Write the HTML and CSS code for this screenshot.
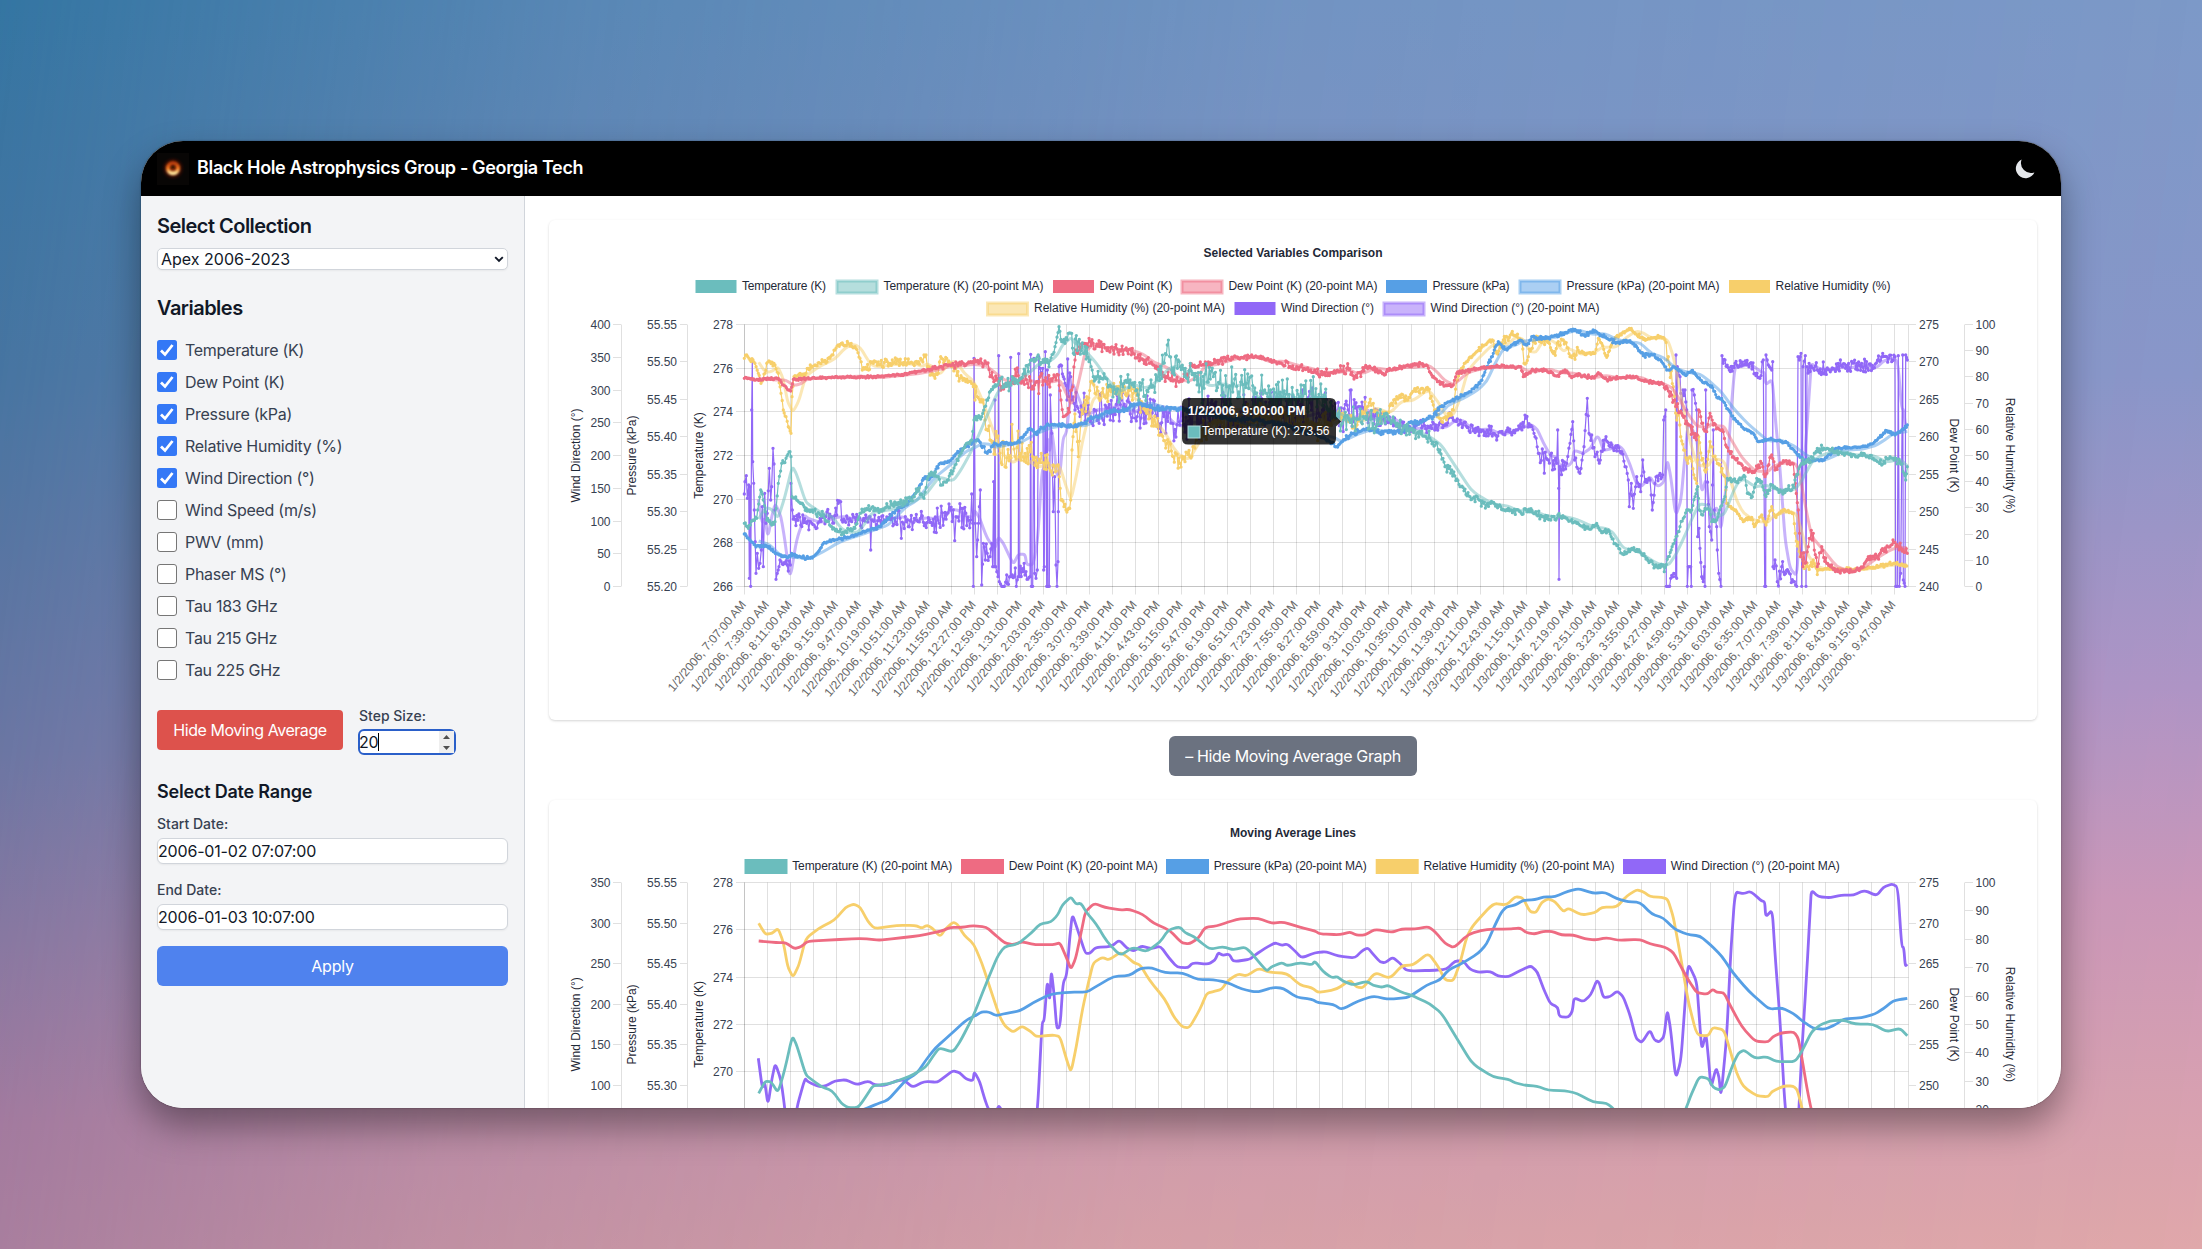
FILE: index.html
```html
<!DOCTYPE html>
<html lang="en">
<head>
<meta charset="utf-8">
<title>Black Hole Astrophysics Group - Georgia Tech</title>
<link rel="stylesheet" href="styles.css">
</head>
<body>
<div class="window">
  <header class="topbar">
    <svg class="logo" viewBox="0 0 32 32" width="32" height="32">
      <defs>
        <radialGradient id="halo"><stop offset="0" stop-color="#c2410c" stop-opacity=".9"/><stop offset=".55" stop-color="#8a2206" stop-opacity=".55"/><stop offset="1" stop-color="#300" stop-opacity="0"/></radialGradient>
        <linearGradient id="ring" x1="0" y1="0" x2="0" y2="1"><stop offset="0" stop-color="#b93d0d"/><stop offset=".55" stop-color="#f07a1c"/><stop offset="1" stop-color="#ffe9a0"/></linearGradient>
        <filter id="soft" x="-50%" y="-50%" width="200%" height="200%"><feGaussianBlur stdDeviation=".9"/></filter>
      </defs>
      <rect width="32" height="32" fill="#080605"/>
      <circle cx="16" cy="15.5" r="12" fill="url(#halo)"/>
      <circle cx="16" cy="15.2" r="5" fill="none" stroke="url(#ring)" stroke-width="4" filter="url(#soft)"/>
      <circle cx="16" cy="14.2" r="2" fill="#2a0a04" filter="url(#soft)"/>
    </svg>
    <h1 class="brand">Black Hole Astrophysics Group - Georgia Tech</h1>
    <svg class="moon" viewBox="0 0 20 20" width="20" height="20"><path d="M6.6 .6A10 10 0 0 0 19.4 13.4A9.7 9.7 0 1 1 6.6 .6Z" fill="#e5e7eb"/></svg>
  </header>
  <div class="body">
    <aside class="sidebar">
      <h2 class="heading">Select Collection</h2>
      <div class="select"><span>Apex 2006-2023</span><svg width="10" height="7" viewBox="0 0 10 7"><path d="M1.2 1.2L5 5L8.8 1.2" fill="none" stroke="#111827" stroke-width="1.9"/></svg></div>
      <h2 class="heading heading-variables">Variables</h2>
      <ul class="variables" id="variables"></ul>
      <div class="average-row">
        <button class="button button-red">Hide Moving Average</button>
        <div class="step">
          <span class="label">Step Size:</span>
          <div class="step-input"><span>20</span><i class="caret"></i><svg class="spinner" width="15" height="22" viewBox="0 0 15 22"><rect width="15" height="22" fill="#efefef"/><path d="M4 8L7.5 4L11 8ZM4 15L7.5 19L11 15Z" fill="#505050"/></svg></div>
        </div>
      </div>
      <h2 class="heading heading-range">Select Date Range</h2>
      <span class="label">Start Date:</span>
      <div class="input">2006-01-02 07:07:00</div>
      <span class="label label-end">End Date:</span>
      <div class="input">2006-01-03 10:07:00</div>
      <button class="button button-blue">Apply</button>
    </aside>
    <main class="content">
      <section class="card"><svg id="comparison" class="chart" viewBox="549 220 1488 500"></svg></section>
      <button class="button button-gray">– Hide Moving Average Graph</button>
      <section class="card"><svg id="averages" class="chart" viewBox="549 800 1488 500"></svg></section>
    </main>
  </div>
</div>
<script src="charts.js"></script>
</body>
</html>
```
FILE: styles.css
```css
* { box-sizing: border-box; }
html, body { margin: 0; height: 100%; }
body {
  position: relative;
  display: flex;
  justify-content: center;
  align-items: flex-start;
  padding-top: 141px;
  overflow: hidden;
  font-family: Inter, "Liberation Sans", sans-serif;
  color: #111827;
  background: linear-gradient(180deg, #7e9ac9 0%, #8b97ca 30%, #b095c6 55%, #cc98b9 72%, #e0a8aa 100%);
}
body::before {
  content: "";
  position: absolute;
  inset: 0;
  background: linear-gradient(180deg, #3475a2 0%, #44739f 30%, #6473a0 60%, #9b759c 90%, #a0789c 100%);
  -webkit-mask-image: linear-gradient(97deg, #000 0%, rgba(0,0,0,.5) 25%, rgba(0,0,0,.16) 55%, transparent 100%);
  mask-image: linear-gradient(97deg, #000 0%, rgba(0,0,0,.5) 25%, rgba(0,0,0,.16) 55%, transparent 100%);
}
.window {
  position: relative;
  width: 1920px;
  height: 967px;
  display: flex;
  flex-direction: column;
  border-radius: 42px;
  overflow: hidden;
  background: #fff;
  box-shadow: 0 18px 36px rgba(0,0,0,.38), 0 0 2px rgba(0,0,0,.4);
}
.topbar {
  flex: 0 0 55px;
  display: flex;
  align-items: center;
  padding: 0 26px 0 16px;
  background: #000;
}
.logo { margin-right: 8px; }
.brand { margin: 0; flex: 1; padding-bottom: 2px; font-size: 18px; line-height: 28px; font-weight: 600; color: #fff; letter-spacing: -.35px; }
.moon { display: block; }
.body { flex: 1; min-height: 0; display: flex; }
.sidebar {
  width: 384px;
  flex: none;
  padding: 16px;
  background: #f3f4f6;
  border-right: 1px solid #d1d5db;
  display: flex;
  flex-direction: column;
}
.heading { margin: 0; font-size: 20px; line-height: 28px; font-weight: 600; letter-spacing: -.52px; }
.select {
  margin-top: 8px;
  height: 22px;
  display: flex;
  align-items: center;
  justify-content: space-between;
  padding: 0 3px;
  border: 1px solid #d1d5db;
  border-radius: 5px;
  background: #fff;
  font-size: 16px;
  line-height: 20px;
  box-shadow: 0 1px 2px rgba(0,0,0,.05);
}
.heading-variables { margin-top: 24px; }
.variables { list-style: none; margin: 12px 0 0; padding: 0; display: flex; flex-direction: column; }
.variable { height: 32px; display: flex; align-items: center; gap: 8px; font-size: 16px; color: #374151; letter-spacing: -.28px; }
.check { display: block; }
.average-row { display: flex; gap: 16px; margin-top: 22px; height: 48px; }
.button { border: 0; height: 40px; font: 400 16px/24px Inter, "Liberation Sans", sans-serif; color: #fff; border-radius: 6px; letter-spacing: -.2px; padding: 0; }
.button-red { width: 186px; margin-top: 2px; border-radius: 4px; background: #dd524c; letter-spacing: -.45px; }
.step { display: flex; flex-direction: column; }
.label { font-size: 14px; line-height: 20px; font-weight: 500; color: #374151; }
.step .label { margin-top: -2px; }
.step-input {
  width: 98px;
  height: 26px;
  margin: 3px 0 0 -1px;
  display: flex;
  align-items: center;
  border: 2px solid #2a5fc9;
  border-radius: 6px;
  background: #fff;
  font-size: 16px;
  letter-spacing: -.3px;
}
.step-input span { margin-left: -1px; }
.caret { width: 1px; height: 18px; background: #000; }
.spinner { margin-left: auto; }
.heading-range { margin-top: 22px; font-size: 18px; letter-spacing: -.2px; }
.heading-range + .label { margin-top: 8px; }
.input {
  height: 26px;
  margin-top: 4px;
  border: 1px solid #d1d5db;
  border-radius: 6px;
  background: #fff;
  font-size: 16px;
  line-height: 24px;
  letter-spacing: -.18px;
  box-shadow: 0 1px 2px rgba(0,0,0,.05);
}
.label-end { margin-top: 16px; }
.button-blue { margin-top: 16px; background: #4f82ee; }
.content {
  flex: 1;
  padding: 24px;
  display: flex;
  flex-direction: column;
  align-items: center;
  background: #fff;
  overflow: hidden;
}
.card {
  flex: none;
  width: 1488px;
  height: 500px;
  border-radius: 6px;
  background: #fff;
  box-shadow: 0 1px 3px rgba(0,0,0,.12), 0 1px 2px rgba(0,0,0,.05);
}
.button-gray { flex: none; width: 248px; margin: 16px 0 24px; background: #6b7280; letter-spacing: -.35px; }
.chart { display: block; width: 1488px; height: 500px; font: 12px "Liberation Sans", Arial, sans-serif; fill: #1f2937; }
.chart .title { font-weight: 700; }
.chart .tick { fill: #374151; }
.chart .time { fill: #666; }
.grid { stroke: rgba(0,0,0,.12); stroke-width: 1; fill: none; }
.edge { stroke: rgba(0,0,0,.12); stroke-width: 1; fill: none; }
.line { fill: none; stroke-linejoin: round; stroke-linecap: butt; }
.chart .tip { fill: #fff; }
```
FILE: charts.js
```js
const COLORS = { temp: '#6bbdbd', dew: '#ee6b82', pres: '#569fe5', hum: '#f7cf6b', wind: '#9168f7' };
const LIGHT = { temp: '#b5dedd', dew: '#f7b5c1', pres: '#abcff3', hum: '#fbe7b5', wind: '#c9b3fb' };
const ORDER = ['wind', 'hum', 'pres', 'dew', 'temp'];

/* Observations: x, y pairs in thirds of a pixel; ~n sets the scatter that follows. */
const raw = {
temp: '~8 133,640 145,655 160,630 170,625 182,540 190,570 200,630 215,645 225,635 235,520 245,460 258,445 270,425 273,440 276,560 290,570 310,585 330,605 370,615 395,650 415,665 440,668 465,655 480,610 500,595 540,600 575,585 620,575 640,560 655,540 672,565 685,500 700,490 715,500 725,525 745,510 765,465 790,415 815,390 822,330 ~10 845,320 860,270 880,230 900,205 ~14 915,230 960,205 1000,150 1050,152 ~8 1065,110 1077,50 1085,95 1095,100 1105,70 1115,70 ~25 1120,130 1135,95 1150,130 1170,150 1180,200 ~15 1200,200 1230,225 ~30 1250,245 1290,210 1310,240 1350,230 1370,210 1390,160 1402,105 1415,180 1435,150 1450,175 ~25 1480,190 1500,225 ~42 1540,200 1580,230 1640,220 1700,250 ~45 1750,260 1800,260 1838,260 1840,200 1842,265 1880,290 ~28 1930,330 1990,320 2020,340 2050,320 ~14 2070,330 2110,355 2150,370 2190,385 ~9 2220,420 2235,470 2255,480 2280,530 2310,560 2350,580 2390,585 2440,605 2490,605 2540,625 2580,618 ~5 2630,640 2670,658 2690,640 2705,668 2725,660 2745,700 2765,730 2780,730 2795,715 2820,725 2850,755 2865,770 2890,765 2893,785 2905,740 2925,690 2940,650 2950,625 2960,600 2975,600 2985,560 2993,530 2998,600 3008,615 3015,595 3028,600 3035,635 3050,630 3062,590 3075,560 3082,505 3110,515 3135,500 3142,550 3157,560 3170,505 3185,515 3195,555 ~9 3215,525 3240,540 3275,540 3285,510 3305,460 3340,445 3352,415 3380,415 3400,425 ~5 3430,430 3470,440 3490,430 3520,445 ~9 3545,465 3570,440 3600,455 3612,490 3617,510 3622,470',
dew: '~3 133,205 170,208 235,205 250,225 265,240 272,243 280,208 400,202 500,201 600,195 680,180 720,170 ~8 800,162 830,155 ~14 858,158 870,200 890,205 ~22 905,230 940,200 970,215 1010,215 ~28 1040,215 1065,200 1075,195 1083,270 1090,320 1105,295 ~40 1115,240 1125,150 1135,130 ~14 1148,100 1170,95 1200,110 ~11 1260,120 1300,130 1330,150 1360,165 ~14 1390,200 1410,205 1440,215 1480,170 ~9 1540,160 1580,145 ~5 1670,140 1740,160 ~8 1790,170 1850,190 ~12 1900,190 1940,175 1965,200 2000,170 ~8 2050,190 2090,175 ~4 2150,162 2182,167 2195,195 2215,215 2235,227 2260,225 2270,190 2320,177 2370,170 2462,170 2470,200 2500,180 2540,182 2570,198 2595,180 2615,203 2630,193 2680,203 2695,188 2720,208 2790,198 2830,212 2890,222 ~12 2902,235 2915,255 2930,290 2945,310 2965,345 2980,370 2992,375 2996,300 3005,340 ~6 3020,365 3030,310 3040,345 3070,365 3077,405 3100,440 3130,475 3160,485 ~10 3185,460 3195,500 3215,435 3225,480 ~4 3250,452 3280,462 3286,520 3295,600 ~22 3302,740 3315,760 3325,710 3340,670 3352,770 3365,710 ~12 3380,760 ~5 3415,785 3460,785 3490,770 3505,740 ~8 3530,742 3550,722 3570,710 ~14 3585,697 3610,720 3622,730',
pres: '~4 133,672 150,690 165,705 200,710 220,725 245,740 265,742 275,730 295,740 325,745 340,740 355,725 370,700 390,690 430,685 470,675 500,662 540,650 560,630 590,600 620,585 650,545 670,505 690,505 705,485 720,460 750,452 770,430 800,405 ~8 820,395 835,390 850,410 862,430 ~5 880,405 910,400 950,398 970,380 990,355 1005,370 1040,345 1090,345 1130,350 1150,340 1170,325 1200,315 1240,300 1260,305 1290,290 1320,280 1345,290 1380,295 1440,297 1500,305 1600,330 1650,325 1750,345 1850,375 1890,395 1910,410 1930,390 1960,370 2000,355 2040,368 2110,365 2130,338 2160,335 2200,320 2220,290 2250,275 2310,245 2340,220 2360,170 2380,130 2395,95 2415,118 2440,102 2465,92 2480,105 2495,80 2540,85 2570,75 2625,58 2650,75 2685,62 2720,85 2750,98 2790,92 2810,110 2830,137 2860,135 2885,155 2900,180 ~3 2925,172 2955,195 2975,182 3010,218 3035,228 3050,262 3065,265 3095,318 3125,350 3160,370 3175,395 3210,388 3260,398 3285,425 3315,452 3370,450 3410,415 3480,412 3520,400 3560,362 3585,375 3605,360 3622,345',
hum: '~6 133,145 140,135 150,150 165,160 175,190 183,220 195,190 200,160 210,155 225,165 235,190 243,250 250,300 258,320 265,350 273,370 276,260 282,200 300,190 315,195 325,175 360,160 390,145 405,120 415,105 445,100 465,110 480,145 487,180 500,178 ~11 520,160 580,160 655,155 665,150 672,135 678,135 682,170 705,205 715,190 722,140 740,145 755,170 780,205 812,215 820,230 ~28 825,270 850,270 855,330 ~45 870,390 900,430 ~60 960,430 1000,450 ~32 1075,465 1078,500 ~14 1083,570 1098,600 1112,570 1116,420 ~55 1122,340 1130,350 1135,440 ~32 1145,300 1160,260 1172,215 ~28 1185,250 1250,230 1300,250 1340,310 1370,350 ~20 1400,400 1420,440 1440,460 1470,440 1490,390 ~30 1540,340 1700,320 1850,350 1900,330 ~20 1925,310 1960,350 1980,320 2020,280 2040,320 ~10 2060,310 2090,260 2120,270 2150,235 2185,240 2200,285 2225,335 2260,300 ~5 2270,210 2290,170 2320,135 2370,90 2380,92 ~12 2390,130 2410,90 2440,75 2465,90 2472,160 2485,140 2500,95 2540,90 2560,130 2590,90 2610,140 2625,148 ~4 2632,112 2640,128 2685,130 2695,85 2705,100 2720,142 2740,90 2788,55 2830,88 2880,80 2895,90 ~18 2905,140 2920,230 2930,330 2937,310 2942,380 ~10 2960,450 2970,440 2990,520 2996,380 3005,450 3020,478 3030,395 3042,440 3055,460 3075,500 ~4 3080,580 3110,605 3130,635 3155,622 3163,650 3185,615 3198,645 3215,590 3225,620 3250,600 3280,610 ~14 3286,670 3300,740 3315,775 3340,750 3355,780 ~4 3380,777 3480,778 3540,768 3585,760 3620,768',
wind: '~0 133,552 135,515 139,497 142,565 146,525 148,805 150,530 152,829 155,300 157,150 158,455 161,520 163,600 168,790 172,730 176,775 180,760 184,720 187,590 190,770 194,550 198,640 202,610 208,475 212,570 215,530 219,415 222,462 225,600 228,808 232,790 237,770 ~18 240,750 271,765 273,520 277,600 282,620 320,640 345,650 360,625 410,615 415,580 422,575 425,630 500,625 510,620 512,720 515,630 600,625 604,685 610,640 700,628 ~30 750,600 760,600 764,692 768,620 812,630 815,552 818,640 820,829 822,145 826,640 ~45 830,740 841,540 845,825 850,700 856,750 862,730 870,740 875,700 ~0 878,770 881,515 883,770 885,270 887,770 894,800 896,137 898,815 905,829 910,829 ~25 920,795 931,800 932,142 934,800 955,800 956,131 958,800 975,795 990,800 ~0 992,133 994,829 998,829 1002,145 1004,790 1008,805 1012,780 1016,140 ~14 1020,175 1028,175 ~0 1031,780 1033,770 1036,125 1040,829 1042,180 1044,829 1048,829 1051,255 1055,370 1060,605 1064,500 1068,765 1071,829 1074,755 1075,605 1077,170 ~30 1082,165 1090,200 1095,220 1101,270 1103,147 1106,260 1112,200 1116,270 ~40 1125,300 1300,300 1335,310 1360,270 1370,320 1440,345 ~50 1500,310 1700,310 1900,310 1980,290 ~28 2050,330 ~14 2120,350 2240,345 2252,310 2260,330 2290,345 2340,360 2380,370 2390,390 2400,365 2450,360 2478,325 2490,350 2505,380 ~30 2515,430 2545,450 2570,460 2573,360 2576,535 2577,808 2579,470 2590,480 ~14 2600,460 2610,400 2618,335 2624,450 2640,490 2652,410 2662,265 2667,370 2675,375 2685,440 2695,450 2718,380 ~10 2730,410 2765,425 2775,470 2785,510 2788,590 2794,520 2800,595 2810,500 2822,545 2828,450 2835,515 2850,510 2857,600 2865,520 2880,490 2888,495 2891,330 2897,300 ~0 2899,829 2909,829 ~12 2912,805 2927,800 2928,135 2930,805 2932,170 2940,200 2945,300 2949,240 2955,240 2960,300 ~0 2962,829 2965,770 2972,770 2974,829 2976,240 ~10 2983,255 2990,300 2993,680 2997,655 3000,715 3005,800 3010,815 3013,770 3015,829 3017,240 3020,450 3028,650 3035,690 3040,360 3043,600 3050,650 3052,720 3056,790 3063,829 3066,137 3070,160 3075,150 3088,180 3105,160 3130,165 3150,160 ~18 3165,190 3180,205 3190,150 ~0 3194,829 3197,829 3198,135 3205,165 3215,180 3218,155 3219,770 ~22 3225,750 3232,815 3245,770 3268,790 3280,815 3290,829 ~0 3294,140 3298,150 3303,130 3305,829 3309,170 3316,137 3318,829 3321,170 ~15 3340,175 3400,175 3470,160 3520,175 3548,130 3575,155 3585,140 ~0 3587,829 3592,829 3595,137 3598,829 3602,790 3608,135 3610,810 3615,829 3617,135 3622,150'
};

/* 20-point moving averages on the second chart's scale, in thirds of a pixel. */
const average = {
temp: '176,1120 196,1083 214,1086 234,1118 254,1050 277,948 290,975 317,1065 337,1080 364,1100 397,1112 424,1150 444,1163 473,1163 491,1140 518,1098 538,1095 571,1090 605,1078 638,1065 678,1040 698,1010 718,983 759,997 783,960 819,890 859,790 892,710 913,680 953,672 993,640 1020,612 1053,606 1073,585 1087,555 1113,530 1127,552 1143,550 1160,578 1187,610 1221,665 1261,707 1298,682 1341,695 1381,665 1405,630 1439,620 1455,638 1482,650 1500,665 1530,688 1568,680 1600,689 1635,681 1655,700 1680,730 1700,753 1715,740 1745,728 1762,737 1800,728 1835,734 1845,724 1870,755 1895,773 1912,770 1930,784 1960,795 2000,784 2020,796 2045,802 2065,796 2100,815 2140,828 2190,852 2225,880 2270,955 2310,1020 2330,1040 2380,1071 2425,1078 2445,1088 2475,1096 2510,1098 2545,1111 2595,1112 2630,1120 2680,1146 2720,1150 2740,1165 2770,1215 2810,1222 2870,1264 2905,1271 2930,1231 2960,1160 2975,1120 2998,1070 3025,1075 3040,1103 3060,1110 3075,1100 3100,1030 3115,1000 3132,990 3165,1015 3200,1010 3230,1025 3285,1025 3305,995 3335,935 3360,915 3390,903 3430,900 3465,912 3520,913 3560,935 3600,925 3622,947',
dew: '176,663 230,668 257,668 283,686 303,680 323,664 390,660 484,655 538,661 591,655 658,647 725,633 752,622 785,622 819,617 859,621 886,645 913,668 939,674 966,665 1006,674 1060,674 1080,668 1100,715 1113,748 1127,715 1143,640 1156,575 1183,550 1214,562 1261,570 1287,568 1328,583 1361,610 1408,630 1445,668 1468,672 1495,655 1515,622 1550,618 1585,606 1620,596 1675,595 1715,610 1750,606 1800,622 1845,633 1860,642 1920,644 1950,636 1970,646 1995,645 2025,628 2075,637 2105,627 2145,627 2185,620 2205,635 2235,670 2262,684 2305,642 2360,628 2430,627 2460,624 2480,638 2505,642 2530,634 2555,634 2585,645 2620,645 2655,656 2685,660 2720,653 2755,661 2820,658 2850,672 2895,681 2920,697 2940,735 2965,780 2990,818 3022,823 3038,808 3050,817 3072,818 3090,855 3125,920 3165,964 3205,966 3218,950 3245,938 3282,936 3295,955 3305,1010 3320,1100 3335,1177 3370,1220 3410,1275 3450,1288 3490,1280 3530,1247 3580,1215 3620,1212',
pres: '176,1191 210,1204 240,1237 270,1244 330,1248 370,1226 420,1193 470,1176 504,1163 531,1152 564,1140 591,1110 618,1080 651,1060 678,1020 705,985 752,943 799,900 826,887 846,875 866,876 888,887 919,880 959,873 1000,848 1053,822 1113,816 1160,817 1187,800 1241,769 1288,767 1321,745 1354,743 1395,758 1448,759 1495,779 1540,779 1580,787 1625,807 1670,817 1720,802 1750,805 1790,832 1835,838 1855,848 1900,853 1925,869 1975,843 2020,828 2065,838 2120,833 2140,823 2180,795 2220,780 2245,750 2290,728 2335,700 2360,672 2385,615 2405,575 2420,560 2445,556 2470,541 2505,539 2530,531 2565,530 2605,513 2637,506 2680,520 2715,517 2750,536 2785,545 2820,547 2855,582 2890,594 2925,628 2960,643 3000,648 3030,673 3065,708 3100,760 3145,812 3200,862 3215,867 3245,864 3280,880 3310,905 3340,925 3375,928 3410,912 3430,897 3485,893 3525,882 3550,866 3580,842 3605,838 3622,835',
hum: '176,610 196,643 216,640 234,625 250,665 263,740 279,772 297,735 317,655 357,625 404,600 437,562 461,552 481,562 504,605 524,626 591,616 645,616 665,624 682,616 698,625 720,650 738,625 759,607 772,612 792,645 821,672 846,730 872,810 899,890 915,918 939,937 966,918 993,935 1009,950 1060,945 1080,950 1100,1020 1113,1057 1129,980 1147,870 1167,780 1180,728 1207,712 1227,720 1261,697 1281,710 1301,728 1321,735 1348,780 1395,838 1421,890 1445,920 1468,924 1500,868 1520,820 1545,814 1565,808 1585,780 1615,762 1640,768 1675,745 1710,757 1760,760 1800,795 1835,803 1855,818 1910,808 1950,780 1970,802 1990,803 2025,757 2070,776 2105,737 2140,735 2185,699 2215,740 2235,780 2260,783 2280,730 2300,650 2320,615 2380,550 2420,555 2445,530 2468,533 2490,575 2508,578 2525,547 2545,536 2565,545 2590,575 2605,565 2645,585 2685,578 2705,562 2750,561 2780,528 2810,509 2830,515 2850,530 2885,532 2903,538 2920,590 2940,700 2965,845 2990,945 3025,948 3038,922 3072,930 3090,990 3110,1060 3130,1100 3170,1128 3205,1130 3215,1115 3250,1098 3280,1098 3292,1110 3305,1160 3325,1242 3360,1280 3430,1287 3500,1283 3580,1269 3620,1267',
wind: '175,1015 187,1105 194,1085 204,1155 216,1075 226,1030 243,1080 254,1163 270,1315 290,1163 315,1075 323,1085 357,1100 377,1098 404,1083 437,1079 471,1094 504,1083 524,1094 551,1097 591,1082 611,1080 638,1102 674,1084 712,1087 732,1072 759,1052 779,1058 799,1078 819,1082 823,1055 839,1085 852,1130 863,1163 885,1200 895,1155 910,1178 940,1258 955,1219 975,1219 980,1258 1000,1258 1013,1163 1026,910 1033,900 1042,780 1049,845 1054,750 1062,820 1070,925 1080,922 1089,790 1100,765 1109,655 1117,582 1133,630 1156,700 1170,700 1187,682 1234,680 1258,660 1281,685 1301,693 1325,678 1354,686 1381,678 1408,715 1432,742 1464,743 1478,728 1525,733 1545,720 1555,698 1568,706 1588,702 1600,725 1650,718 1665,705 1695,685 1725,668 1745,676 1762,672 1780,688 1805,714 1845,698 1878,695 1915,708 1965,714 1985,693 2003,683 2020,703 2040,726 2055,728 2078,712 2100,730 2120,753 2200,751 2240,748 2265,723 2290,723 2310,748 2335,757 2370,754 2395,769 2425,770 2460,752 2492,737 2512,755 2530,805 2550,850 2573,862 2578,890 2605,892 2617,875 2622,833 2650,845 2672,825 2690,782 2698,788 2710,833 2730,830 2752,813 2770,830 2790,885 2808,955 2825,968 2850,930 2863,960 2878,966 2892,950 2902,868 2912,930 2927,1078 2943,1020 2955,850 2963,745 2968,737 2990,785 2997,880 3005,990 3018,940 3025,1010 3033,1105 3048,1043 3057,1070 3063,1132 3080,950 3092,700 3105,515 3130,521 3152,514 3185,543 3194,545 3197,590 3217,570 3225,700 3240,900 3255,1162 3270,1272 3290,1300 3297,1162 3305,1000 3320,760 3330,580 3334,510 3355,530 3390,533 3425,525 3460,526 3493,511 3530,527 3550,502 3575,492 3593,500 3605,680 3611,682 3616,738 3622,733'
};

let seed = 7;
const rnd = () => (seed = (seed * 16807) % 2147483647) / 2147483647;
const X = u => 700 + u / 3;
const f = n => n.toFixed(1);

function scatter(text) {
  const out = [];
  let n = 0, prev = null;
  for (const t of text.split(' ')) {
    if (t[0] === '~') { n = +t.slice(1); continue; }
    const [x, y] = t.split(',').map(Number);
    if (prev) {
      const steps = Math.max(1, Math.round((x - prev[0]) / 3));
      for (let i = 1; i < steps; i++) {
        const k = i / steps;
        const big = Math.abs(y - prev[1]) / (x - prev[0]) > 12 ? 0 : 1;
        const s = (rnd() + rnd() - 1) * 1.6;
        out.push([prev[0] + (x - prev[0]) * k, Math.max(43, Math.min(829, prev[1] + (y - prev[1]) * k + s * n * big))]);
      }
    }
    out.push([x, y]);
    prev = [x, y];
  }
  return out.map(([x, y]) => [X(x), 310 + y / 3]);
}
const pairs = text => text.split(' ').map(t => t.split(',').map(Number));
const poly = pts => 'M' + pts.map(p => f(p[0]) + ' ' + f(p[1])).join('L');
/* rounds each corner over a quarter of its neighbouring segments */
function smooth(pts) {
  let d = 'M' + f(pts[0][0]) + ' ' + f(pts[0][1]);
  for (let i = 1; i < pts.length - 1; i++) {
    const [px, py] = pts[i - 1], [a, b] = pts[i], [c, e] = pts[i + 1];
    d += `L${f(a - (a - px) * .3)} ${f(b - (b - py) * .3)}Q${f(a)} ${f(b)} ${f(a + (c - a) * .3)} ${f(b + (e - b) * .3)}`;
  }
  const l = pts[pts.length - 1];
  return d + `L${f(l[0])} ${f(l[1])}`;
}

const text = (x, y, s, cls, extra = '') => `<text x="${x}" y="${y}" class="${cls}" ${extra}>${s}</text>`;
const turned = (x, y, deg, s) => `<text transform="translate(${x} ${y}) rotate(${deg})" text-anchor="middle" dy="4">${s}</text>`;

function axes(top, bottom, wind) {
  let s = '', g = '';
  const h = bottom - top;
  const L = 744.5, R = 1908.5;
  for (let k = 0; k <= 50; k++) { const x = Math.round(L + k * 22.99 - .5) + .5; g += `M${x} ${top}V${bottom + 8}`; }
  g += `M${R} ${top}V${bottom}`;
  for (let i = 0; i <= 6; i++) {
    const y = Math.round(top + h * i / 6 - .5) + .5;
    g += `M736 ${y}H${R}`;
    s += text(733, y + 4, 278 - 2 * i, 'tick', 'text-anchor="end"');
  }
  g += `M621.5 ${top}V${bottom}M687.5 ${top}V${bottom}M1964.5 ${top}V${bottom}`;
  for (let v = 0; v <= wind; v += 50) {
    const y = Math.round(bottom - h * v / wind - .5) + .5;
    g += `M613 ${y}H621`; s += text(610.5, y + 4, v, 'tick', 'text-anchor="end"');
  }
  for (let i = 0; i <= 7; i++) {
    const y = Math.round(top + h * i / 7 - .5) + .5;
    g += `M680 ${y}H687M1909 ${y}H1916`;
    s += text(677, y + 4, (55.55 - .05 * i).toFixed(2), 'tick', 'text-anchor="end"');
    s += text(1919, y + 4, 275 - 5 * i, 'tick');
  }
  for (let v = 0; v <= 100; v += 10) {
    const y = Math.round(bottom - h * v / 100 - .5) + .5;
    g += `M1965 ${y}H1973`; s += text(1975.5, y + 4, v, 'tick');
  }
  const m = (top + bottom) / 2;
  s += turned(575.5, m, -90, 'Wind Direction (°)') + turned(631.5, m, -90, 'Pressure (kPa)') + turned(699, m, -90, 'Temperature (K)');
  s += turned(1954, m, 90, 'Dew Point (K)') + turned(2009.5, m, 90, 'Relative Humidity (%)');
  return `<path class="grid" d="${g}"/><path class="edge" d="M${L} ${top}V${bottom}M${L} ${bottom}H${R}"/>` + s;
}

function comparison() {
  let s = text(1293, 257, 'Selected Variables Comparison', 'title', 'text-anchor="middle" textLength="179"');
  const legend = [
    [695.5, 286, 'temp', 0, 'Temperature (K)', 84], [837, 286, 'temp', 1, 'Temperature (K) (20-point MA)', 160],
    [1053, 286, 'dew', 0, 'Dew Point (K)', 73], [1182, 286, 'dew', 1, 'Dew Point (K) (20-point MA)', 149],
    [1386, 286, 'pres', 0, 'Pressure (kPa)', 77], [1520, 286, 'pres', 1, 'Pressure (kPa) (20-point MA)', 153],
    [1729, 286, 'hum', 0, 'Relative Humidity (%)', 115], [987.5, 308, 'hum', 1, 'Relative Humidity (%) (20-point MA)', 191],
    [1234.5, 308, 'wind', 0, 'Wind Direction (°)', 93], [1384, 308, 'wind', 1, 'Wind Direction (°) (20-point MA)', 169]];
  for (const [x, y, c, ma, label, w] of legend) {
    s += ma ? `<rect x="${x}" y="${y - 5}" width="40" height="12" fill="${LIGHT[c]}" stroke="${COLORS[c]}" stroke-opacity=".5" stroke-width="3"/>`
            : `<rect x="${x}" y="${y - 6}" width="41" height="13" fill="${COLORS[c]}"/>`;
    s += text(x + 46.5, y + 4, label, '', `textLength="${w}"`);
  }
  s += axes(324.5, 586.5, 400);
  for (let k = 0; k <= 50; k++) {
    const t = 427 + 32 * k, day = t >= 1440 ? 3 : 2, h = Math.floor(t / 60) % 24, m = String(t % 60).padStart(2, '0');
    const x = 743.5 + k * 22.99;
    s += `<text class="time" transform="translate(${f(x)} 602.5) rotate(-50)" text-anchor="end" dy="4">1/${day}/2006, ${h % 12 || 12}:${m}:00 ${h < 12 ? 'AM' : 'PM'}</text>`;
  }
  for (const c of ORDER) {
    const pts = pairs(average[c]).map(([u, v]) => {
      const q = (v - 487) / 851.4;
      return [X(u), c === 'wind' ? 586.3 - 262 * 350 / 400 * (1 - q) : 324.3 + 262 * q];
    });
    s += `<path class="line" d="${smooth(pts)}" stroke="${COLORS[c]}" stroke-opacity=".5" stroke-width="3"/>`;
    const d = scatter(raw[c]);
    s += `<path class="line" d="${poly(d)}" stroke="${COLORS[c]}" stroke-width="1.2"/>`;
    s += `<path d="${d.map(p => `M${f(p[0])} ${f(p[1])}h.01`).join('')}" fill="none" stroke="${COLORS[c]}" stroke-width="3.3" stroke-linecap="round"/>`;
  }
  s += `<path d="M1188 398H1330Q1336 398 1336 404V416.5L1341 421.5L1336 426.5V438.5Q1336 444.5 1330 444.5H1188Q1182 444.5 1182 438.5V404Q1182 398 1188 398Z" fill="#000" fill-opacity=".8"/>`;
  s += text(1188, 415, '1/2/2006, 9:00:00 PM', 'tip title', 'textLength="117.5"');
  s += `<rect x="1188" y="426" width="12" height="12" fill="${COLORS.temp}" stroke="#b5dedd"/>`;
  s += text(1202, 435, 'Temperature (K): 273.56', 'tip', 'textLength="127.5"');
  document.getElementById('comparison').innerHTML = s;
}

function averages() {
  let s = text(1293, 836.5, 'Moving Average Lines', 'title', 'text-anchor="middle" textLength="126"');
  const legend = [[744.5, 'temp', 'Temperature (K) (20-point MA)', 160], [961, 'dew', 'Dew Point (K) (20-point MA)', 149],
    [1166, 'pres', 'Pressure (kPa) (20-point MA)', 153], [1375.7, 'hum', 'Relative Humidity (%) (20-point MA)', 191], [1623, 'wind', 'Wind Direction (°) (20-point MA)', 169]];
  for (const [x, c, label, w] of legend) {
    s += `<rect x="${x}" y="859" width="43" height="15" fill="${COLORS[c]}"/>` + text(x + 47.7, 870, label, '', `textLength="${w}"`);
  }
  s += axes(882.5, 1166.3, 350);
  for (const c of ORDER) {
    const pts = pairs(average[c]).map(([u, v]) => [X(u), 720 + v / 3]);
    s += `<path class="line" d="${smooth(pts)}" stroke="${COLORS[c]}" stroke-width="2.8"/>`;
  }
  document.getElementById('averages').innerHTML = s;
}

const names = ['Temperature (K)', 'Dew Point (K)', 'Pressure (kPa)', 'Relative Humidity (%)', 'Wind Direction (°)', 'Wind Speed (m/s)', 'PWV (mm)', 'Phaser MS (°)', 'Tau 183 GHz', 'Tau 215 GHz', 'Tau 225 GHz'];
document.getElementById('variables').innerHTML = names.map((n, i) => `<li class="variable"><svg class="check" width="20" height="20" viewBox="0 0 20 20">${
  i < 5 ? '<rect width="20" height="20" rx="2.5" fill="#3478f6"/><path d="M4 10.5L8 14.5L15.5 5" fill="none" stroke="#fff" stroke-width="2.8"/>'
        : '<rect x=".5" y=".5" width="19" height="19" rx="2.5" fill="#fff" stroke="#767676"/>'}</svg><span>${n}</span></li>`).join('');
comparison();
averages();
```
